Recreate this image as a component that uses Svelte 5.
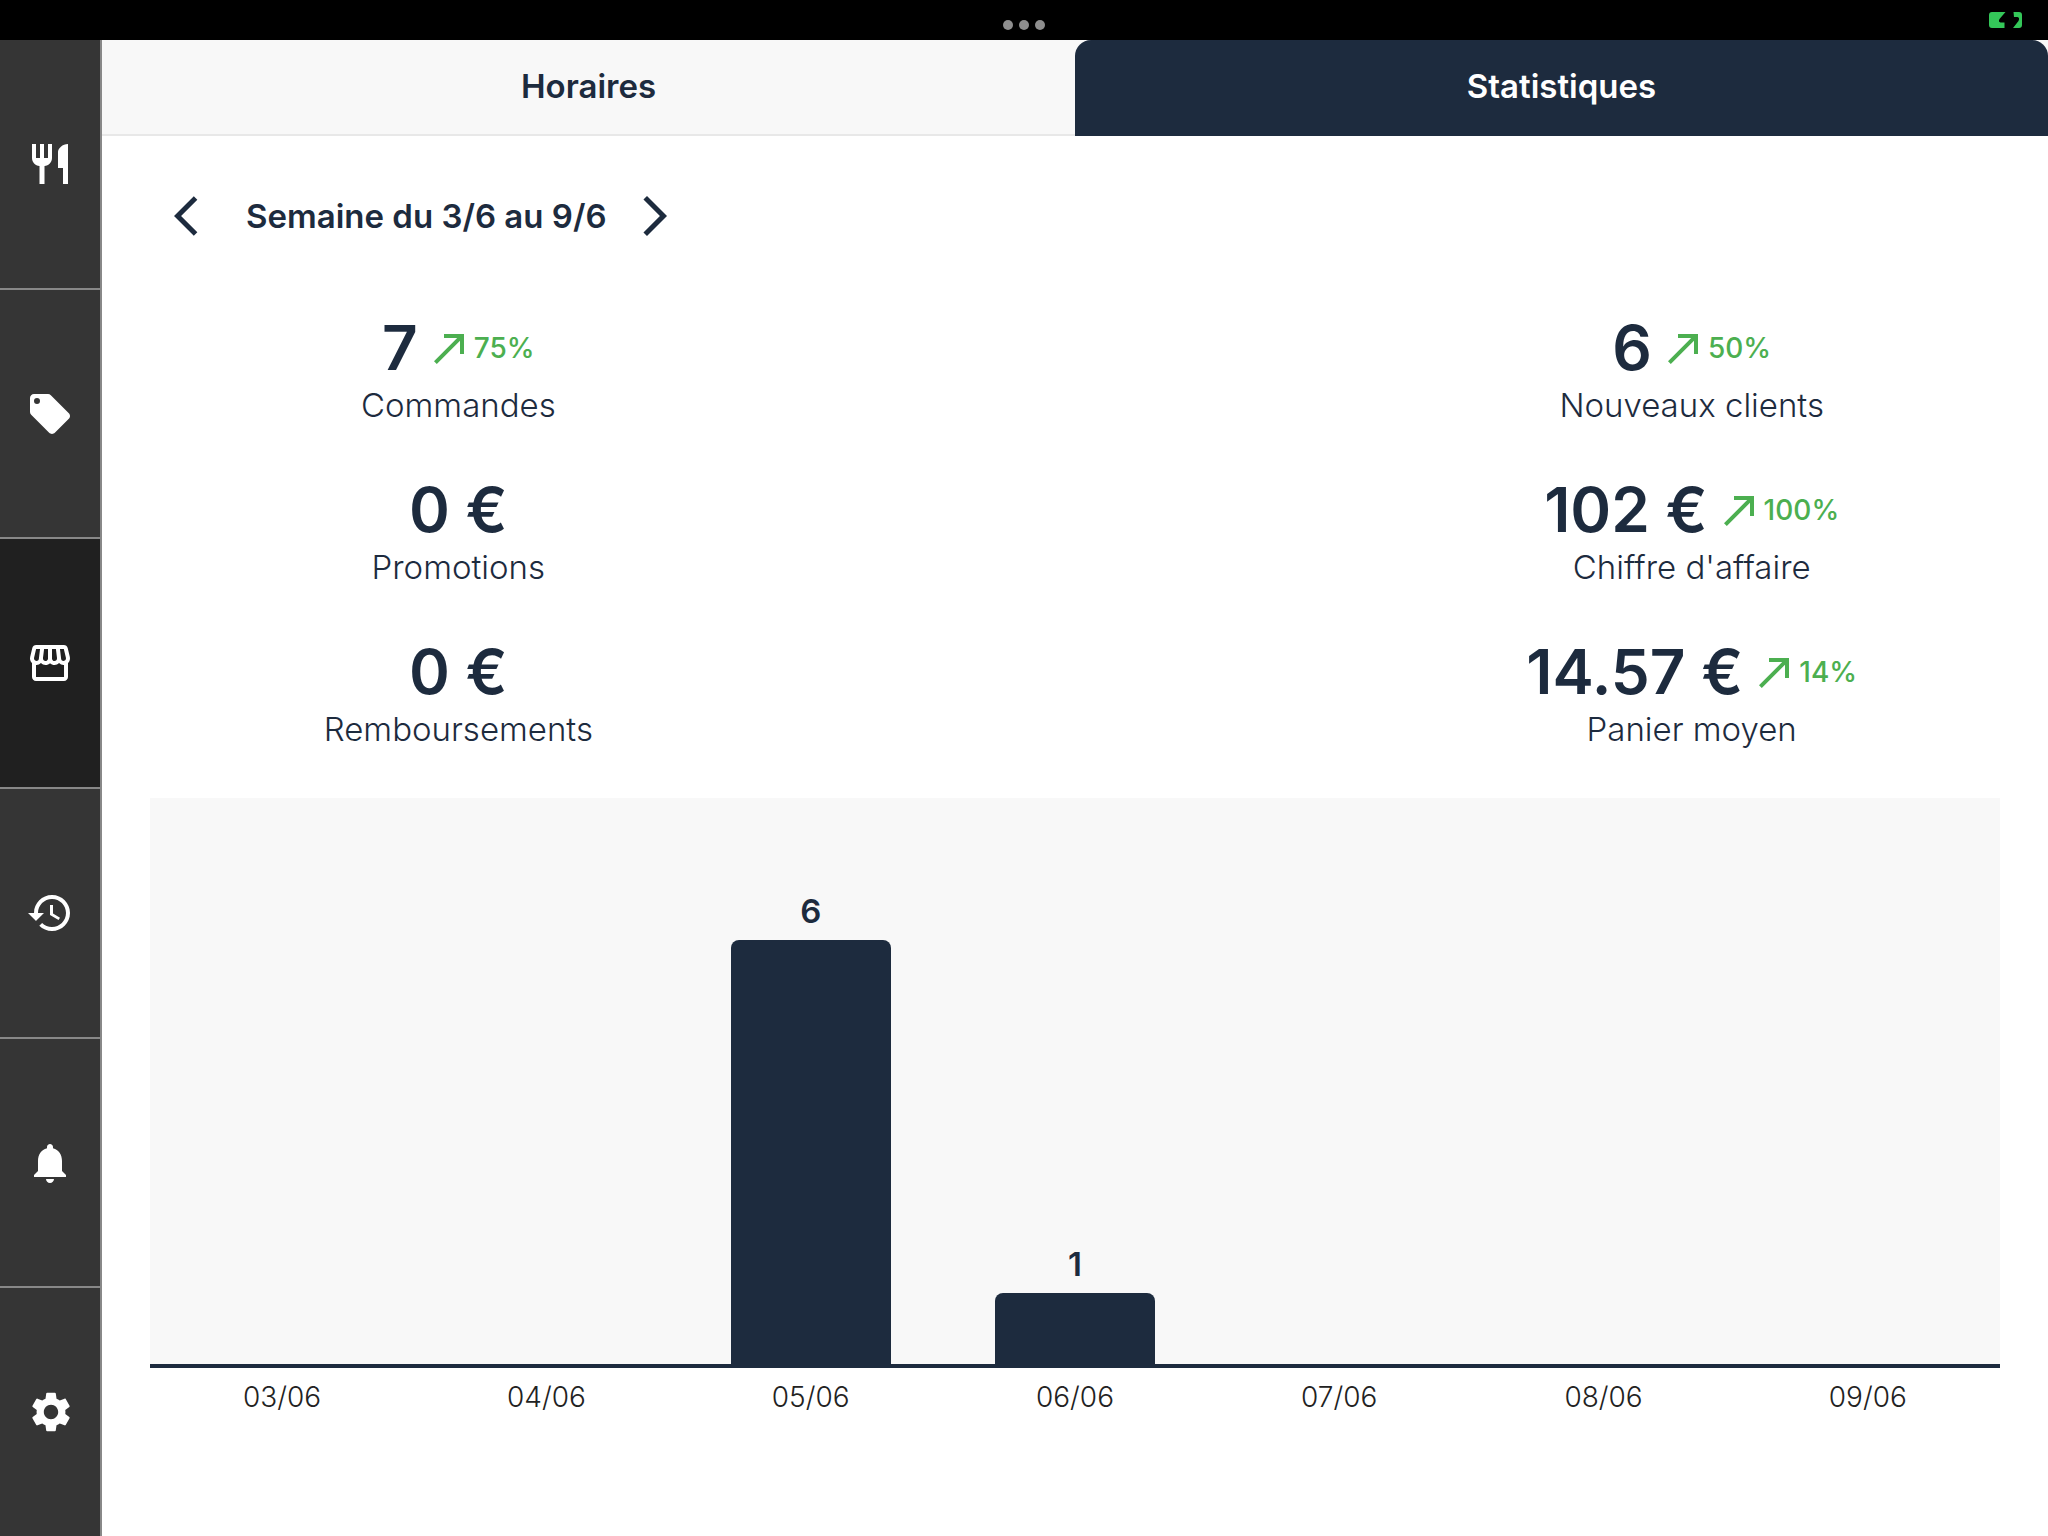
<script lang="ts">
	type Stat = { value: string; label: string; trend?: string };

	let activeNav = 'store';
	let activeTab = 'Statistiques';

	const tabs = ['Horaires', 'Statistiques'];

	const nav = [
		{
			id: 'orders',
			title: 'Commandes',
			path: 'M11,9H9V2H7V9H5V2H3V9C3,11.12 4.66,12.84 6.75,12.97V22H9.25V12.97C11.34,12.84 13,11.12 13,9V2H11V9M16,6V14H18.5V22H21V2C18.24,2 16,4.24 16,6Z'
		},
		{
			id: 'offers',
			title: 'Promotions',
			path: 'M5.5,7A1.5,1.5 0 0,1 4,5.5A1.5,1.5 0 0,1 5.5,4A1.5,1.5 0 0,1 7,5.5A1.5,1.5 0 0,1 5.5,7M21.41,11.58L12.41,2.58C12.05,2.22 11.55,2 11,2H4C2.89,2 2,2.89 2,4V11C2,11.55 2.22,12.05 2.59,12.41L11.58,21.41C11.95,21.77 12.45,22 13,22C13.55,22 14.05,21.77 14.41,21.41L21.41,14.41C21.78,14.05 22,13.55 22,13C22,12.44 21.77,11.94 21.41,11.58Z'
		},
		{
			id: 'store',
			title: 'Restaurant',
			path: 'M21.9 8.89l-1.05-4.37c-.22-.9-1-1.52-1.91-1.52H5.05c-.9 0-1.69.63-1.9 1.52L2.1 8.89c-.24 1.02-.02 2.06.62 2.88.08.11.19.19.28.29V19c0 1.1.9 2 2 2h14c1.1 0 2-.9 2-2v-6.94c.09-.09.2-.18.28-.28.64-.82.87-1.87.62-2.89zm-2.99-3.9l1.05 4.37c.1.42.01.84-.25 1.17-.14.18-.44.47-.94.47-.61 0-1.14-.49-1.21-1.14L16.98 5l1.93-.01zM13 5h1.96l.54 4.52c.05.39-.07.78-.33 1.07-.22.26-.54.41-.95.41-.67 0-1.22-.59-1.22-1.31V5zM8.49 9.52L9.04 5H11v4.69c0 .72-.55 1.31-1.29 1.31-.34 0-.65-.15-.89-.41-.25-.29-.37-.68-.33-1.07zm-4.45-.16L5.05 5h1.97l-.58 4.86c-.08.65-.6 1.14-1.21 1.14-.49 0-.8-.29-.93-.47-.27-.32-.36-.75-.26-1.17zM5 19v-6.03c.08.01.15.03.23.03.87 0 1.66-.36 2.24-.95.6.6 1.4.95 2.31.95.87 0 1.65-.36 2.23-.93.59.57 1.39.93 2.29.93.84 0 1.64-.35 2.24-.95.58.59 1.37.95 2.24.95.08 0 .15-.02.23-.03V19H5z'
		},
		{
			id: 'history',
			title: 'Historique',
			path: 'M13 3c-4.97 0-9 4.03-9 9H1l3.89 3.89.07.14L9 12H6c0-3.87 3.13-7 7-7s7 3.13 7 7-3.13 7-7 7c-1.93 0-3.68-.79-4.94-2.06l-1.42 1.42C8.27 19.99 10.51 21 13 21c4.97 0 9-4.03 9-9s-4.03-9-9-9zm-1 5v5l4.28 2.54.72-1.21-3.5-2.08V8H12z'
		},
		{
			id: 'alerts',
			title: 'Notifications',
			path: 'M12 22c1.1 0 2-.9 2-2h-4c0 1.1.89 2 2 2zm6-6v-5c0-3.07-1.64-5.64-4.5-6.32V4c0-.83-.67-1.5-1.5-1.5s-1.5.67-1.5 1.5v.68C7.63 5.36 6 7.92 6 11v5l-2 2v1h16v-1l-2-2z'
		},
		{
			id: 'settings',
			title: 'Paramètres',
			viewBox: '-0.5 0 24 24',
			path: 'M19.14,12.94c0.04-0.3,0.06-0.61,0.06-0.94c0-0.32-0.02-0.64-0.07-0.94l2.03-1.58c0.18-0.14,0.23-0.41,0.12-0.61l-1.92-3.32c-0.12-0.22-0.37-0.29-0.59-0.22l-2.39,0.96c-0.5-0.38-1.03-0.7-1.62-0.94L14.4,2.81c-0.04-0.24-0.24-0.41-0.48-0.41h-3.84c-0.24,0-0.43,0.17-0.47,0.41L9.25,5.35C8.66,5.59,8.12,5.92,7.63,6.29L5.24,5.33c-0.22-0.08-0.47,0-0.59,0.22L2.74,8.87C2.62,9.08,2.66,9.34,2.86,9.48l2.03,1.58C4.84,11.36,4.8,11.69,4.8,12s0.02,0.64,0.07,0.94l-2.03,1.58c-0.18,0.14-0.23,0.41-0.12,0.61l1.92,3.32c0.12,0.22,0.37,0.29,0.59,0.22l2.39-0.96c0.5,0.38,1.03,0.7,1.62,0.94l0.36,2.54c0.05,0.24,0.24,0.41,0.48,0.41h3.84c0.24,0,0.44-0.17,0.47-0.41l0.36-2.54c0.59-0.24,1.13-0.56,1.62-0.94l2.39,0.96c0.22,0.08,0.47,0,0.59-0.22l1.92-3.32c0.12-0.22,0.07-0.47-0.12-0.61L19.14,12.94z M12,15.6c-1.98,0-3.6-1.62-3.6-3.6s1.62-3.6,3.6-3.6s3.6,1.62,3.6,3.6S13.98,15.6,12,15.6z'
		}
	];

	const columns: Stat[][] = [
		[
			{ value: '7', label: 'Commandes', trend: '75%' },
			{ value: '0 €', label: 'Promotions' },
			{ value: '0 €', label: 'Remboursements' }
		],
		[
			{ value: '6', label: 'Nouveaux clients', trend: '50%' },
			{ value: '102 €', label: "Chiffre d'affaire", trend: '100%' },
			{ value: '14.57 €', label: 'Panier moyen', trend: '14%' }
		]
	];

	const days = [
		{ date: '03/06', count: 0 },
		{ date: '04/06', count: 0 },
		{ date: '05/06', count: 6 },
		{ date: '06/06', count: 1 },
		{ date: '07/06', count: 0 },
		{ date: '08/06', count: 0 },
		{ date: '09/06', count: 0 }
	];

	// leave room above the tallest bar for its label
	const chartMax = 8;
</script>

<div class="app">
	<div class="status">
		<div class="dots"><i></i><i></i><i></i></div>
		<svg class="battery" viewBox="0 0 34 16" aria-hidden="true">
			<path d="M3 0H16.500L10.500 7Q9 10 11.500 10.500H15.500V16H3Q0 16 0 13V3Q0 0 3 0Z" />
			<path d="M24.500 0H30Q33 0 33 3V13Q33 16 30 16H24L29.500 9Q31 5.500 28.500 5H25Z" />
		</svg>
	</div>

	<div class="body">
		<nav>
			{#each nav as item}
				<button
					class:active={activeNav === item.id}
					aria-label={item.title}
					on:click={() => (activeNav = item.id)}
				>
					<svg class="icon" viewBox={item.viewBox ?? '0 0 24 24'}><path d={item.path} /></svg>
				</button>
			{/each}
		</nav>

		<main>
			<div class="tabs" role="tablist">
				{#each tabs as tab}
					<button
						role="tab"
						aria-selected={activeTab === tab}
						class:selected={activeTab === tab}
						on:click={() => (activeTab = tab)}>{tab}</button
					>
				{/each}
			</div>

			<div class="content">
				<div class="week">
					<button aria-label="Semaine précédente">
						<svg class="icon" viewBox="0 0 24 24">
							<path d="M11.67 3.87L9.9 2.1 0 12l9.9 9.9 1.77-1.77L3.54 12z" />
						</svg>
					</button>
					<h2>Semaine du 3/6 au 9/6</h2>
					<button aria-label="Semaine suivante">
						<svg class="icon" viewBox="0 0 24 24">
							<path d="M6.23 20.23L8 22l10-10L8 2 6.23 3.77 14.46 12z" />
						</svg>
					</button>
				</div>

				<div class="stats">
					{#each columns as column}
						<div class="column">
							{#each column as stat}
								<div class="stat">
									<div class="figure">
										<strong>{stat.value}</strong>
										{#if stat.trend}
											<span class="trend">
												<svg class="icon" viewBox="0 0 24 24">
													<path d="M9 5v2h6.59L4 18.59 5.41 20 17 8.41V15h2V5z" />
												</svg>
												{stat.trend}
											</span>
										{/if}
									</div>
									<div class="label">{stat.label}</div>
								</div>
							{/each}
						</div>
					{/each}
				</div>

				<div class="chart">
					{#each days as day}
						<div class="slot">
							{#if day.count}
								<span>{day.count}</span>
								<div class="bar" style="height: {(day.count / chartMax) * 100}%"></div>
							{/if}
						</div>
					{/each}
				</div>
				<div class="dates">
					{#each days as day}
						<span>{day.date}</span>
					{/each}
				</div>
			</div>
		</main>
	</div>
</div>

<style>
	:global(body) {
		background: #fff;
	}
	.app {
		display: flex;
		flex-direction: column;
		height: 100vh;
		min-height: 1200px;
		font-family: Inter, 'Liberation Sans', sans-serif;
		color: #1d2b3e;
	}
	button {
		display: flex;
		align-items: center;
		justify-content: center;
		padding: 0;
		border: 0;
		background: none;
		color: inherit;
		font: inherit;
		cursor: pointer;
	}
	.icon {
		display: block;
		width: 48px;
		height: 48px;
		fill: currentColor;
	}

	.status {
		display: grid;
		grid-template-columns: 1fr auto 1fr;
		height: 40px;
		background: #000;
	}
	.dots {
		grid-column: 2;
		display: flex;
		gap: 6px;
		padding-top: 20px;
	}
	.dots i {
		width: 10px;
		height: 10px;
		border-radius: 50%;
		background: #8e8e8e;
	}
	.battery {
		justify-self: end;
		width: 34px;
		height: 16px;
		margin: 12px 25px 0 0;
		fill: #34c759;
	}

	.body {
		display: flex;
		flex: 1;
		min-height: 0;
	}
	nav {
		display: flex;
		flex-direction: column;
		width: 100px;
		border-right: 2px solid #888;
		background: #353535;
		color: #fff;
	}
	nav button {
		flex: 1;
		border-bottom: 2px solid #888;
	}
	nav button:last-child {
		border-bottom: 0;
	}
	nav .active {
		background: #202020;
	}

	main {
		display: flex;
		flex: 1;
		flex-direction: column;
		min-width: 0;
	}
	.tabs {
		display: flex;
		background: #f8f8f8;
	}
	.tabs button {
		flex: 1;
		height: 96px;
		padding-bottom: 2px;
		border-bottom: 2px solid #e8e8e8;
		font-size: 33px;
		font-weight: 600;
	}
	.tabs .selected {
		border-bottom-color: #1d2b3e;
		border-radius: 16px 16px 0 0;
		background: #1d2b3e;
		color: #fff;
	}

	.content {
		display: flex;
		flex: 1;
		flex-direction: column;
		padding: 56px 48px 118px;
	}
	.week {
		display: flex;
		align-items: center;
		gap: 24px;
		padding-left: 24px;
	}
	h2 {
		margin: 0;
		font-size: 33px;
		font-weight: 600;
		line-height: 48px;
	}

	.stats {
		display: flex;
		justify-content: space-between;
		margin: 76px 0 48px;
	}
	.column {
		display: flex;
		flex-direction: column;
		gap: 52px;
		width: calc(100% / 3);
	}
	.stat {
		display: flex;
		flex-direction: column;
		align-items: center;
		gap: 4px;
	}
	.figure {
		display: flex;
		align-items: center;
		gap: 8px;
		height: 64px;
	}
	strong {
		font-size: 62px;
		font-weight: 600;
		line-height: 64px;
	}
	.trend {
		display: flex;
		align-items: center;
		color: #4caf50;
		font-size: 28px;
		font-weight: 500;
	}
	.label {
		font-size: 33px;
		font-weight: 300;
		line-height: 42px;
	}

	.chart {
		display: flex;
		flex: 1;
		border-bottom: 4px solid #1d2b3e;
		background: #f8f8f8;
	}
	.slot {
		display: flex;
		flex: 1;
		flex-direction: column;
		align-items: center;
		justify-content: flex-end;
	}
	.slot span {
		margin-bottom: 8px;
		font-size: 33px;
		font-weight: 600;
		line-height: 42px;
	}
	.bar {
		width: 160px;
		border-radius: 8px 8px 0 0;
		background: #1d2b3e;
	}
	.dates {
		display: flex;
		padding-top: 8px;
		color: #222;
		font-size: 28px;
		font-weight: 300;
		line-height: 42px;
	}
	.dates span {
		flex: 1;
		text-align: center;
	}
</style>
